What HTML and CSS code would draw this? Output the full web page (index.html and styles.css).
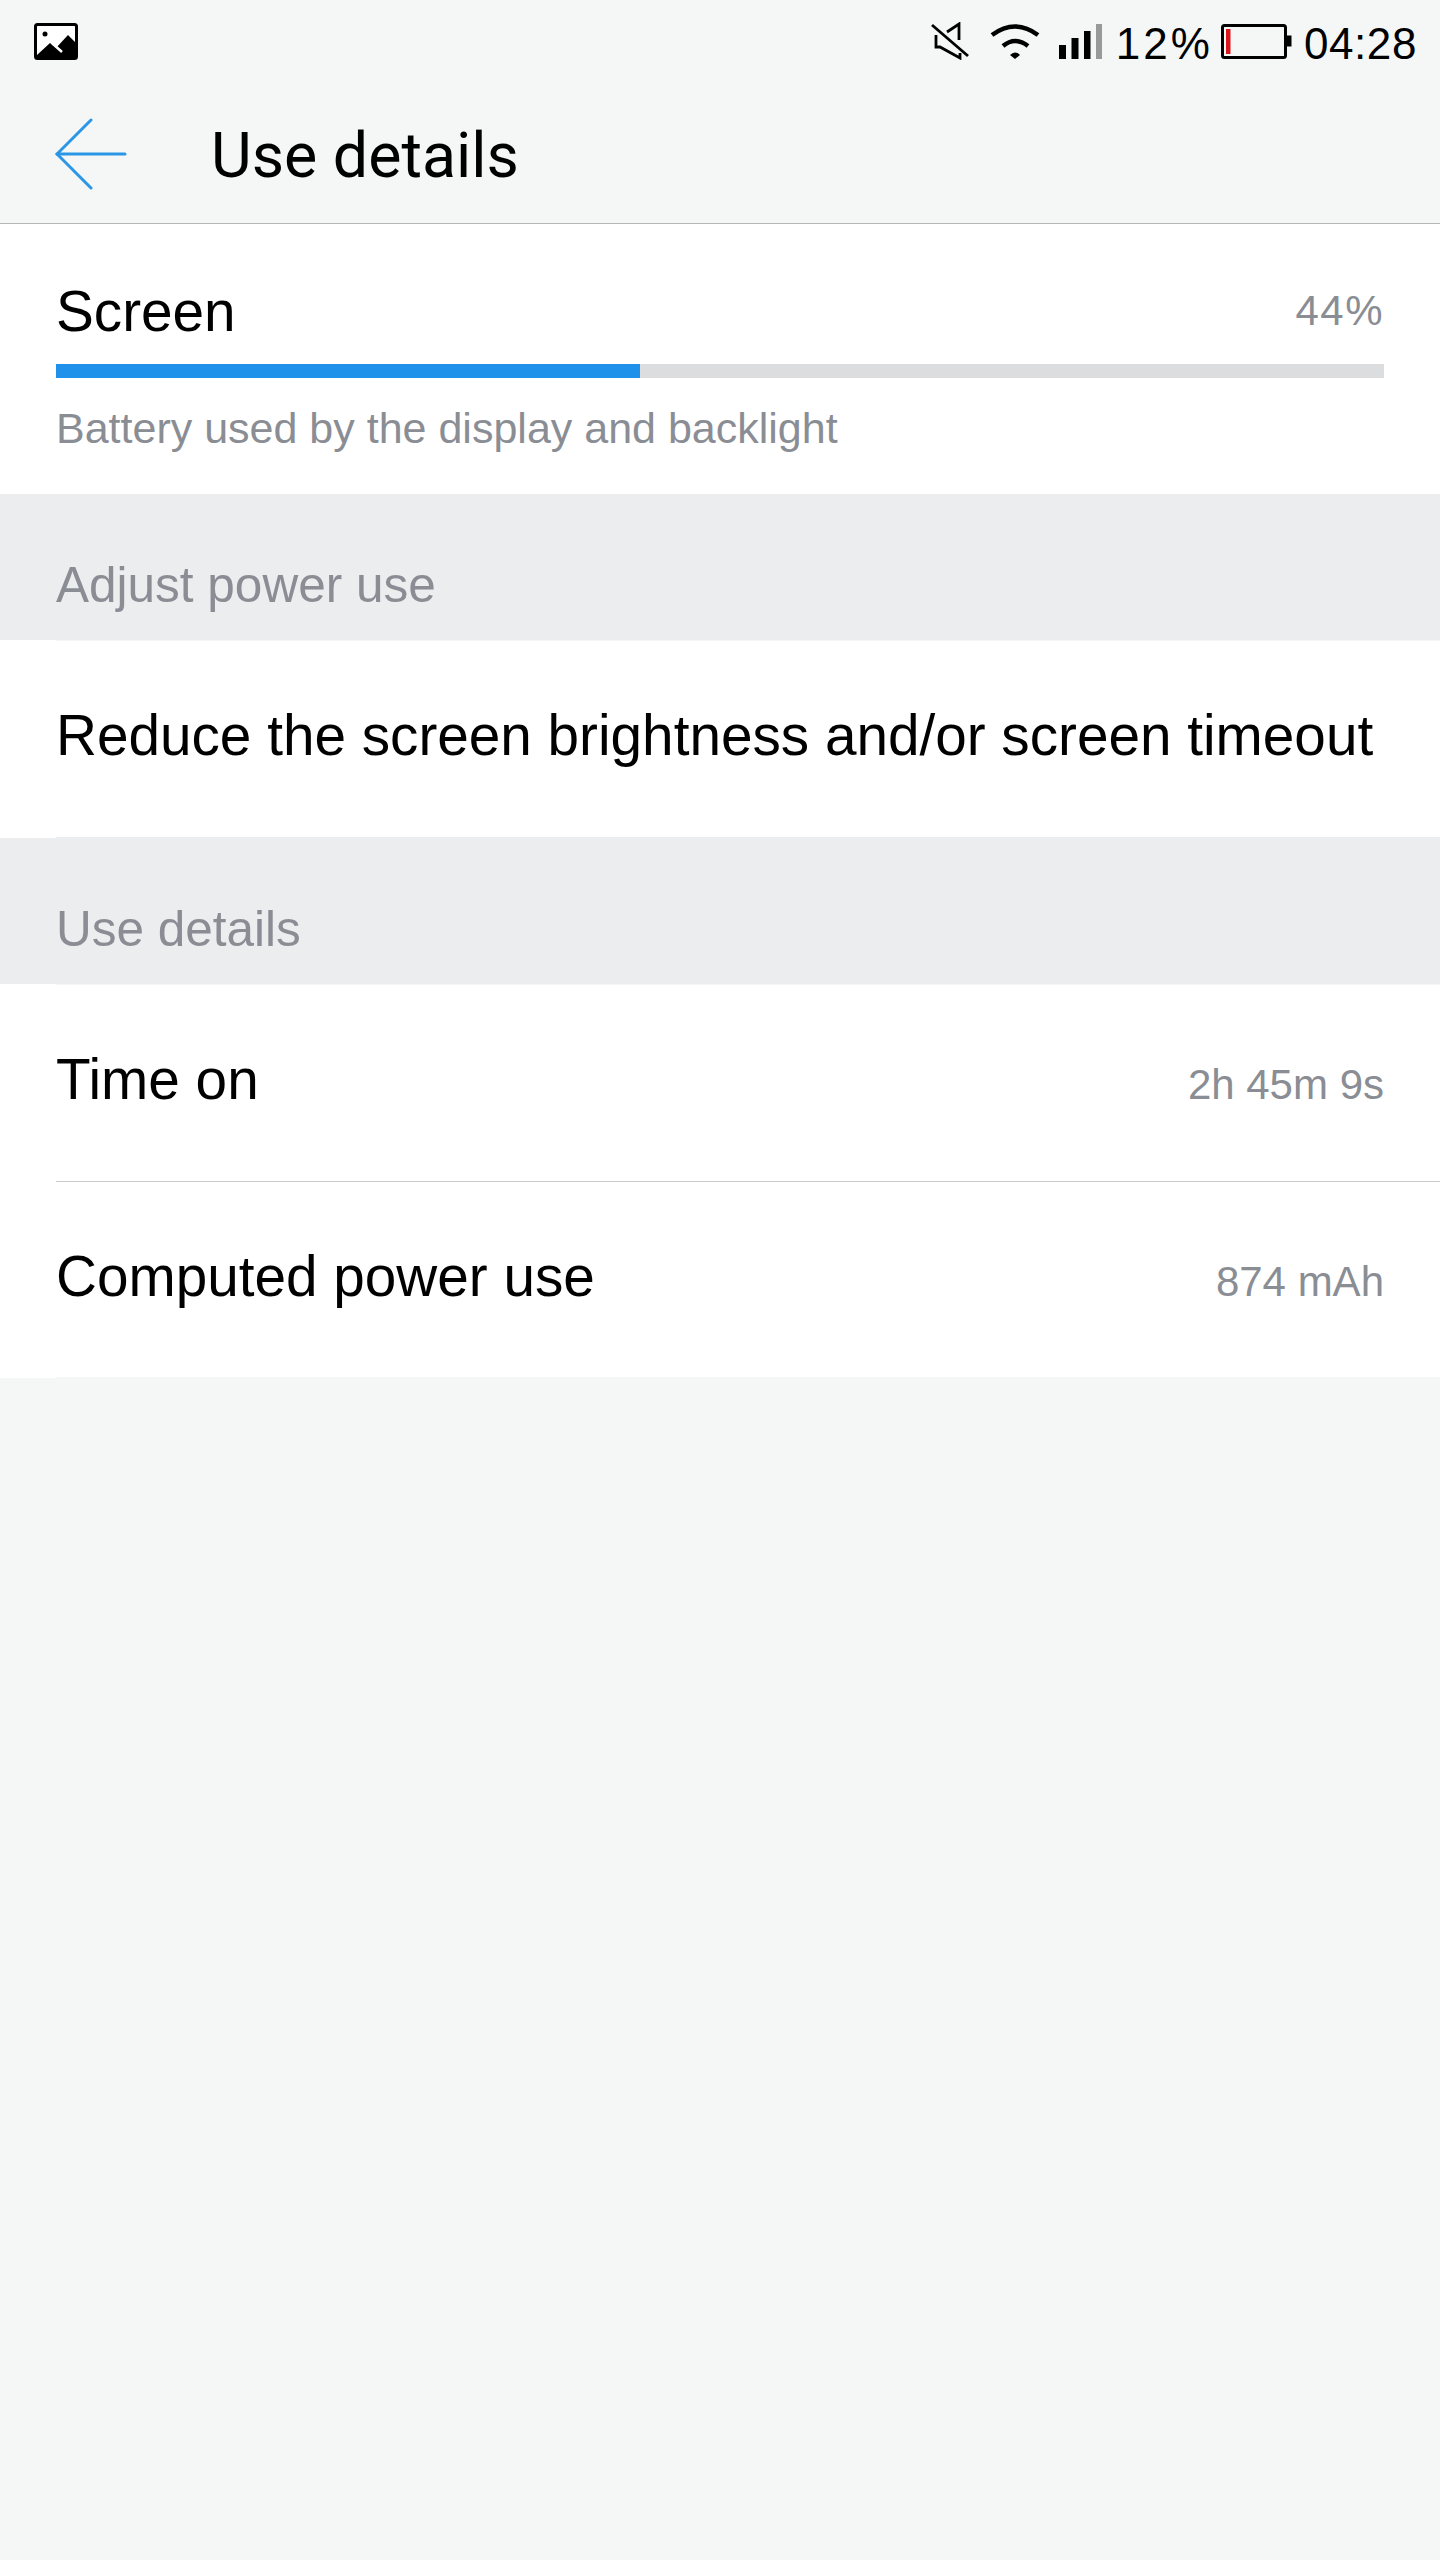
FILE: index.html
```html
<!DOCTYPE html>
<html lang="en">
<head>
    <meta charset="UTF-8">
    <title>Use details</title>
    <link rel="stylesheet" href="styles.css">
</head>
<body>

    <!-- Status bar -->
    <div class="status-bar">
        <svg class="icon-picture" width="44" height="37" viewBox="0 0 44 37">
            <rect x="1.5" y="1.5" width="41" height="34" rx="2" fill="#fff" stroke="#000" stroke-width="3"/>
            <circle cx="11" cy="11" r="2.5" fill="#000"/>
            <path d="M3 32 L16 20 L22 25 L34 12 L41 19 V35 H3 Z" fill="#000"/>
            <path d="M18 20 L28 29" stroke="#fff" stroke-width="2.5" fill="none"/>
        </svg>
        <div class="status-right">
            <svg class="icon-mute" width="38" height="38" viewBox="0 0 38 38" fill="none" stroke="#000" stroke-width="2.8">
                <path d="M1 3 L37 34"/>
                <path d="M28 18 V2 L16 10"/>
                <path d="M5 13 V25 H9 L29 36 V31"/>
            </svg>
            <svg class="icon-wifi" width="50" height="36" viewBox="0 0 50 36" fill="none" stroke="#000" stroke-width="4.5">
                <path d="M2 12 Q25 -5 48 12"/>
                <path d="M13 23 Q25 13 38 23"/>
                <path d="M20 32 Q25 27 30 32 L25 36 Z" fill="#000" stroke="none"/>
            </svg>
            <svg class="icon-signal" width="43" height="35" viewBox="0 0 43 35">
                <rect x="0" y="21" width="7" height="14" fill="#000"/>
                <rect x="12.5" y="14" width="7" height="21" fill="#000"/>
                <rect x="25" y="7" width="6.5" height="28" fill="#000"/>
                <rect x="37" y="0" width="6" height="35" fill="#999"/>
            </svg>
            <span class="status-text status-pct">12%</span>
            <svg class="icon-battery" width="71" height="35" viewBox="0 0 71 35">
                <rect x="1.5" y="1.5" width="63" height="32" rx="2" fill="none" stroke="#000" stroke-width="3"/>
                <rect x="5" y="5" width="4.5" height="25" fill="#d6161c"/>
                <rect x="66" y="11.5" width="4.5" height="11" fill="#000"/>
            </svg>
            <span class="status-text status-time">04:28</span>
        </div>
    </div>

    <!-- Title bar -->
    <header class="title-bar">
        <svg class="icon-back" width="72" height="72" viewBox="0 0 72 72" fill="none" stroke="#2b95e6" stroke-width="3" stroke-linecap="round">
            <path d="M36 2 L2 36 L36 70"/>
            <path d="M2 36 H70"/>
        </svg>
        <h1>Use details</h1>
    </header>

    <!-- Screen -->
    <section class="usage">
        <div class="usage-top">
            <span class="row-title">Screen</span>
            <span class="row-value row-pct">44%</span>
        </div>
        <div class="bar"><div class="bar-fill" style="width: 44%"></div></div>
        <p class="usage-desc">Battery used by the display and backlight</p>
    </section>

    <h2 class="section-head">Adjust power use</h2>
    <div class="list">
        <div class="row row-single"><span class="row-title">Reduce the screen brightness and/or screen timeout</span></div>
    </div>

    <h2 class="section-head">Use details</h2>
    <div class="list">
        <div class="row">
            <span class="row-title">Time on</span>
            <span class="row-value">2h 45m 9s</span>
        </div>
        <div class="row row-end">
            <span class="row-title">Computed power use</span>
            <span class="row-value">874 mAh</span>
        </div>
    </div>

</body>
</html>
```

FILE: styles.css
```css
html, body {
    margin: 0;
    height: 100%;
}
body {
    font-family: "Liberation Sans", Arial, sans-serif;
    background-color: #f5f7f7;
    color: #000;
}
.status-bar {
    height: 84px;
    padding: 22px 23px 0 34px;
    box-sizing: border-box;
    display: flex;
    justify-content: space-between;
    align-items: flex-start;
}
.icon-picture { margin-top: 1px; }
.status-right {
    display: flex;
    align-items: flex-start;
}
.icon-mute { margin-right: 21px; }
.icon-wifi { margin-right: 19px; margin-top: 1px; }
.icon-signal { margin-right: 13.5px; margin-top: 2px; }
.icon-battery { margin-top: 2px; margin-left: 8px; margin-right: 12px; }
.status-text {
    font-size: 44px;
    line-height: 44px;
}
.status-pct { letter-spacing: 3px; }
.status-time { letter-spacing: 0.6px; }
.title-bar {
    height: 140px;
    box-sizing: border-box;
    border-bottom: 1px solid #b4b6b8;
    display: flex;
    align-items: flex-start;
    padding-left: 55px;
}
.title-bar .icon-back { margin-top: 34px; }
.title-bar h1 {
    margin: 36px 0 0 84px;
    font-family: Roboto, sans-serif;
    font-weight: 400;
    font-size: 62.7px;
    line-height: 72px;
}
.usage {
    background-color: #fff;
    height: 270px;
    box-sizing: border-box;
    padding: 55px 56px 0;
}
.usage-top {
    display: flex;
    justify-content: space-between;
    align-items: flex-start;
    height: 85px;
}
.row-title {
    font-size: 56.7px;
    line-height: 66px;
}
.row-value {
    font-size: 42px;
    line-height: 48px;
    color: #8a8d94;
}
.row-pct {
    margin-top: 8px;
    letter-spacing: 1.5px;
}
.bar {
    height: 14px;
    background-color: #dcdddf;
}
.bar-fill {
    height: 100%;
    background-color: #2091ea;
}
.usage-desc {
    margin: 26px 0 0;
    font-size: 43px;
    line-height: 48px;
    color: #8a8d94;
}
.section-head {
    margin: 0;
    height: 146px;
    box-sizing: border-box;
    padding: 63px 0 0 56px;
    background-color: #ecedef;
    color: #8a8d94;
    font-weight: 400;
    font-size: 49.5px;
    line-height: 56px;
}
.list {
    background-color: #fff;
}
.row {
    height: 197px;
    box-sizing: border-box;
    padding: 62px 56px 0 0;
    margin-left: 56px;
    border-top: 1px solid #f6f6f7;
    display: flex;
    justify-content: space-between;
    align-items: baseline;
}
.row + .row {
    border-top-color: #c9cacc;
}
.row-single {
    height: 198px;
    border-bottom: 1px solid #ecedef;
}
.row-end {
    border-bottom: 1px solid #f5f7f7;
}
```
